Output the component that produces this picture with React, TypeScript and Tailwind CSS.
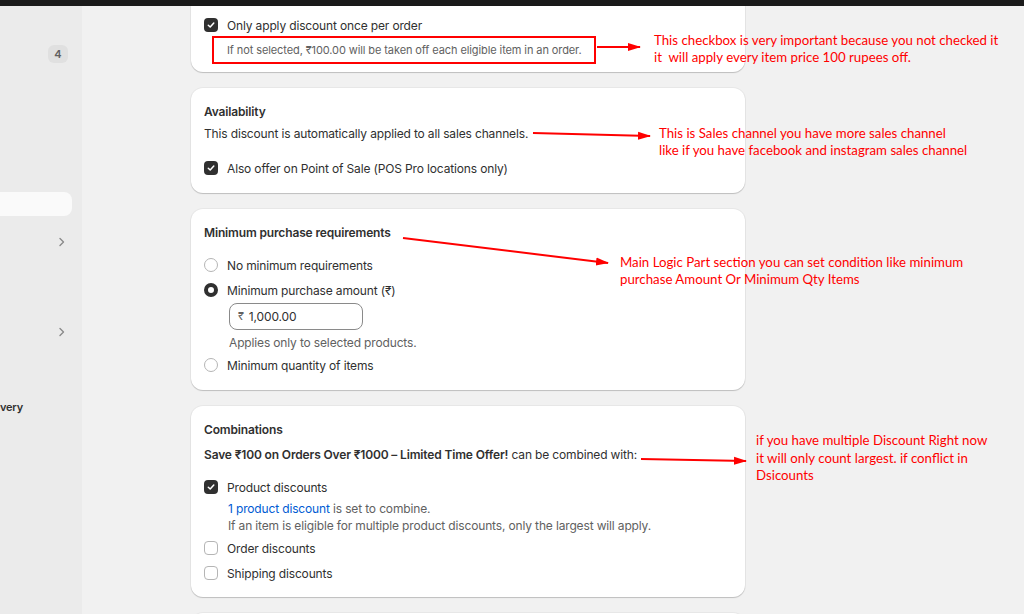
import React from 'react';

const ui = { fontFamily: 'Inter, "Noto Sans", sans-serif' };
const note = { fontFamily: 'Lato, "Open Sans", sans-serif' };

function Check({ on }: { on?: boolean }) {
  if (on) {
    return (
      <span className="flex h-[14px] w-[14px] shrink-0 items-center justify-center rounded-[4px] bg-[#303030]">
        <svg width="10" height="10" viewBox="0 0 10 10" fill="none">
          <path d="M2.3 5.2 4.2 7 7.8 3" stroke="#fff" strokeWidth="1.5" strokeLinecap="round" strokeLinejoin="round" />
        </svg>
      </span>
    );
  }
  return <span className="h-[14px] w-[14px] shrink-0 rounded-[4px] border border-[#b5b5b5] bg-white" />;
}

function Radio({ on }: { on?: boolean }) {
  return on ? (
    <span className="h-[14px] w-[14px] shrink-0 rounded-full border-[4px] border-[#303030] bg-white" />
  ) : (
    <span className="h-[14px] w-[14px] shrink-0 rounded-full border border-[#b5b5b5] bg-white" />
  );
}

function Row({ control, children }: { control: React.ReactNode; children: React.ReactNode }) {
  return (
    <div className="flex h-5 items-center gap-[9px] text-[12px] tracking-[-0.15px] text-[#303030]">
      {control}
      <span className="pt-[1px]">{children}</span>
    </div>
  );
}

function Card({ className, children }: { className?: string; children: React.ReactNode }) {
  return (
    <div className={`w-[554px] shrink-0 bg-white px-[13px] shadow-[0_1px_1px_rgba(0,0,0,0.18),0_0_0_1px_rgba(0,0,0,0.04)] ${className ?? ''}`}>
      {children}
    </div>
  );
}

function Chevron() {
  return (
    <svg width="8" height="10" viewBox="0 0 8 10" fill="none">
      <path d="M2 1.5 5.5 5 2 8.5" stroke="#8a8a8a" strokeWidth="1.4" strokeLinecap="round" strokeLinejoin="round" />
    </svg>
  );
}

function Sidebar() {
  return (
    <div className="flex w-[82px] shrink-0 flex-col bg-[#ebebeb]">
      <div className="mt-[39px] flex justify-end pr-[14px]">
        <span className="flex h-[18px] w-[20px] items-center justify-center rounded-md bg-[#e0e0e0] text-[11px] font-semibold text-[#616161]">4</span>
      </div>
      <div className="mt-[129px] h-6 w-[72px] rounded-r-lg bg-[#fafafa]" />
      <div className="mt-[21px] flex justify-end pr-[16px]">
        <Chevron />
      </div>
      <div className="mt-[80px] flex justify-end pr-[16px]">
        <Chevron />
      </div>
      <div className="mt-[62px] text-[11px] font-semibold leading-4 tracking-[-0.2px] text-[#303030]">very</div>
    </div>
  );
}

function Notes() {
  return (
    <>
      <svg className="pointer-events-none absolute left-0 top-0" width="1024" height="614">
        <defs>
          <marker id="ah" markerWidth="14" markerHeight="10" refX="12" refY="5" orient="auto" markerUnits="userSpaceOnUse">
            <path d="M0 1 13 5 0 9z" fill="#ff0000" />
          </marker>
        </defs>
        <g stroke="#ff0000" strokeWidth="2" fill="none">
          <line x1="597" y1="47" x2="640" y2="47" markerEnd="url(#ah)" />
          <line x1="533" y1="133" x2="650" y2="136" markerEnd="url(#ah)" />
          <line x1="403" y1="238" x2="608" y2="263" markerEnd="url(#ah)" />
          <line x1="641" y1="459" x2="746" y2="461" markerEnd="url(#ah)" />
        </g>
      </svg>
      <div style={note} className="absolute left-[654px] top-[32px] text-[13.25px] leading-[17px] text-[#ff0000]">
        <div>This checkbox is very important because you not checked it</div>
        <div className="whitespace-pre">it  will apply every item price 100 rupees off.</div>
      </div>
      <div style={note} className="absolute left-[659px] top-[125px] text-[13.25px] leading-[17px] text-[#ff0000]">
        <div>This is Sales channel you have more sales channel</div>
        <div>like if you have facebook and instagram sales channel</div>
      </div>
      <div style={note} className="absolute left-[620px] top-[254px] text-[13.25px] leading-[17px] text-[#ff0000]">
        <div>Main Logic Part section you can set condition like minimum</div>
        <div>purchase Amount Or Minimum Qty Items</div>
      </div>
      <div style={note} className="absolute left-[756px] top-[432px] text-[13.25px] leading-[17.5px] text-[#ff0000]">
        <div>if you have multiple Discount Right now</div>
        <div>it will only count largest. if conflict in</div>
        <div>Dsicounts</div>
      </div>
    </>
  );
}

export default function App() {
  return (
    <div style={ui} className="relative h-[614px] w-[1024px] overflow-hidden bg-[#f1f1f1]">
      <div className="h-[6px] bg-[#1a1a1a]" />
      <div className="flex h-[608px]">
        <Sidebar />
        <div className="flex flex-col gap-4 pl-[109px]">
          <Card className="rounded-b-xl pb-[8px] pt-[9px]">
            <Row control={<Check on />}>Only apply discount once per order</Row>
            <div className="ml-[8px] mt-[1px] flex h-[28px] w-[384px] items-center whitespace-nowrap border-2 border-[#ff0000] pl-[13px] text-[11px] tracking-[-0.1px] text-[#616161]">
              If not selected, ₹100.00 will be taken off each eligible item in an order.
            </div>
          </Card>

          <Card className="rounded-xl pb-[15px] pt-[13px]">
            <div className="pt-[1px] text-[12px] font-semibold leading-5 tracking-[-0.15px] text-[#303030]">Availability</div>
            <div className="mt-[1px] pt-[1px] text-[12px] leading-5 tracking-[-0.15px] text-[#303030]">This discount is automatically applied to all sales channels.</div>
            <div className="mt-[14px]">
              <Row control={<Check on />}>Also offer on Point of Sale (POS Pro locations only)</Row>
            </div>
          </Card>

          <Card className="rounded-xl pb-[15px] pt-[13px]">
            <div className="pt-[1px] text-[12px] font-semibold leading-5 tracking-[-0.15px] text-[#303030]">Minimum purchase requirements</div>
            <div className="mt-[12px]">
              <Row control={<Radio />}>No minimum requirements</Row>
            </div>
            <div className="mt-[5px]">
              <Row control={<Radio on />}>Minimum purchase amount (₹)</Row>
            </div>
            <div className="ml-[25px] mt-[3px] flex h-[27px] w-[134px] items-center gap-[5px] rounded-lg border border-[#8a8a8a] px-[8px] text-[12px] tracking-[-0.15px] text-[#303030]">
              <span className="text-[11px] text-[#616161]">₹</span>
              <span>1,000.00</span>
            </div>
            <div className="ml-[25px] mt-[5px] text-[12px] leading-4 tracking-[-0.15px] text-[#616161]">Applies only to selected products.</div>
            <div className="mt-[4px]">
              <Row control={<Radio />}>Minimum quantity of items</Row>
            </div>
          </Card>

          <Card className="h-[191px] rounded-xl pt-[13px]">
            <div className="pt-[1px] text-[12px] font-semibold leading-5 tracking-[-0.15px] text-[#303030]">Combinations</div>
            <div className="mt-[4px] pt-[1px] text-[12px] leading-5 tracking-[-0.15px] text-[#303030]">
              <span className="font-semibold">Save ₹100 on Orders Over ₹1000 – Limited Time Offer!</span> can be combined with:
            </div>
            <div className="mt-[12px]">
              <Row control={<Check on />}>Product discounts</Row>
            </div>
            <div className="ml-[24px] mt-[4px] text-[12px] leading-4 tracking-[-0.15px] text-[#616161]">
              <div>
                <span className="text-[#005bd3]">1 product discount</span> is set to combine.
              </div>
              <div className="mt-[1px]">If an item is eligible for multiple product discounts, only the largest will apply.</div>
            </div>
            <div className="mt-[4px]">
              <Row control={<Check />}>Order discounts</Row>
            </div>
            <div className="mt-[5px]">
              <Row control={<Check />}>Shipping discounts</Row>
            </div>
          </Card>

          <Card className="h-10 rounded-t-xl">
            <span />
          </Card>
        </div>
      </div>
      <Notes />
    </div>
  );
}
